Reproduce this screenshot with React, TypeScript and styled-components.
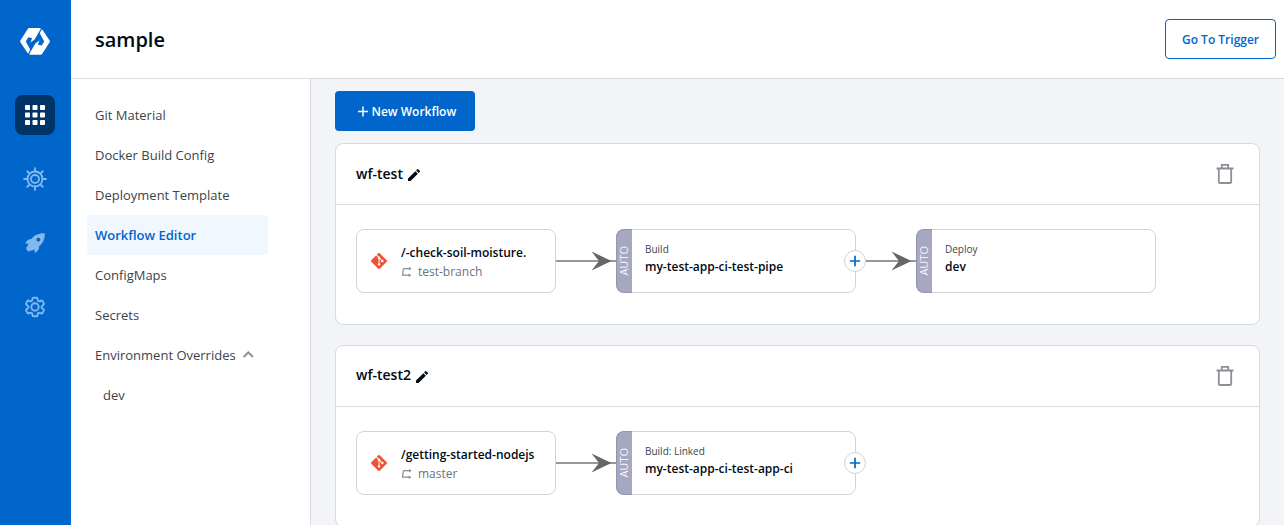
import React from "react";
import styled, { createGlobalStyle, css } from "styled-components";
import { MdEdit } from "react-icons/md";
import { SiGit } from "react-icons/si";

const GlobalStyle = createGlobalStyle`
  * { box-sizing: border-box; }
  body {
    margin: 0;
    height: 525px;
    overflow: hidden;
    font-family: "Open Sans", sans-serif;
    color: #000a14;
  }
  svg { display: block; flex: none; }
`;

const Shell = styled.div`
  display: grid;
  grid-template-columns: 71px 1fr;
  height: 525px;
  overflow: hidden;
`;

const Rail = styled.aside`
  background: #0066cc;
  display: flex;
  flex-direction: column;
  align-items: center;
  padding: 21px 1px 0 0;
  gap: 24px;
`;

const Logo = styled.div`
  height: 50px;
  padding-top: 6px;
`;

const RailButton = styled.a<{ $active?: boolean }>`
  width: 40px;
  height: 40px;
  border-radius: 8px;
  display: flex;
  align-items: center;
  justify-content: center;
  color: #80b8f0;
  ${(p) => p.$active && css`background: #003366; color: #fff;`}
`;

const Page = styled.div`
  display: flex;
  flex-direction: column;
  min-width: 0;
`;

const Header = styled.header`
  height: 79px;
  flex: none;
  display: flex;
  align-items: center;
  justify-content: space-between;
  padding: 0 8px 0 24px;
  border-bottom: 1px solid #d6dbdf;
  background: #fff;
`;

const Title = styled.h1`
  margin: 0;
  padding-top: 2px;
  font-size: 20px;
  font-weight: 600;
  line-height: 28px;
`;

const TriggerButton = styled.button`
  width: 111px;
  height: 40px;
  padding: 2px 0 0;
  border: 1px solid #0066cc;
  border-radius: 4px;
  background: #fff;
  color: #0066cc;
  font: 600 12px/20px "Open Sans", sans-serif;
`;

const Body = styled.div`
  display: grid;
  grid-template-columns: 240px 1fr;
  flex: 1;
  min-height: 0;
`;

const Nav = styled.nav`
  padding: 16px 42px 0 16px;
  border-right: 1px solid #d6dbdf;
  background: #fff;
`;

const NavItem = styled.a<{ $active?: boolean; $nested?: boolean }>`
  display: flex;
  align-items: center;
  gap: 7px;
  height: 40px;
  padding-left: ${(p) => (p.$nested ? 16 : 8)}px;
  border-radius: 4px;
  font-size: 13px;
  white-space: nowrap;
  color: #3b444c;
  ${(p) => p.$active && css`background: #f0f7ff; color: #0066cc; font-weight: 600;`}
`;

const Main = styled.main`
  background: #f2f4f7;
  padding: 12px 24px 0;
  overflow: hidden;
`;

const NewButton = styled.button`
  display: flex;
  align-items: center;
  gap: 1.500px;
  width: 140px;
  height: 40px;
  padding: 2px 0 0 22px;
  margin-bottom: 12px;
  border: 0;
  border-radius: 4px;
  background: #0066cc;
  color: #fff;
  font: 600 12px/20px "Open Sans", sans-serif;
`;

const Card = styled.section`
  height: 182px;
  margin-bottom: 20px;
  border: 1px solid #d6dbdf;
  border-radius: 8px;
  background: #fff;
`;

const CardHeader = styled.div`
  height: 61px;
  display: flex;
  align-items: center;
  padding: 0 25px 0 20px;
  border-bottom: 1px solid #d6dbdf;
`;

const CardName = styled.span<{ $lift: number }>`
  font-size: 14px;
  font-weight: 600;
  line-height: 20px;
  margin-right: 3px;
  padding-bottom: ${(p) => p.$lift}px;
`;

const EditMark = styled.span`
  padding-top: 2px;
`;

const Trash = styled.span`
  margin-left: auto;
`;

const Flow = styled.div`
  display: flex;
  align-items: center;
  padding: 24px 20px 0;
`;

const Node = styled.div<{ $width: number }>`
  position: relative;
  display: flex;
  align-items: center;
  width: ${(p) => p.$width}px;
  height: 64px;
  flex: none;
  border: 1px solid #d0d4d9;
  border-radius: 8px;
`;

const GitMark = styled.span`
  color: #f05133;
  margin: 0 14px;
`;

const NodeText = styled.div<{ $padTop?: number; $padBottom?: number }>`
  display: flex;
  flex-direction: column;
  padding-top: ${(p) => p.$padTop ?? 0}px;
  padding-bottom: ${(p) => p.$padBottom ?? 0}px;
  white-space: nowrap;
`;

const NodeName = styled.span`
  font-size: 12px;
  font-weight: 600;
  line-height: 18px;
`;

const Branch = styled.span`
  display: flex;
  align-items: center;
  gap: 5px;
  font-size: 12px;
  line-height: 20px;
  color: #6b737a;
`;

const Kind = styled.span`
  font-size: 10px;
  line-height: 17px;
  color: #3b444c;
`;

const AutoTab = styled.div`
  width: 16px;
  height: 64px;
  margin: -1px 13px -1px -1px;
  padding-right: 2px;
  flex: none;
  display: flex;
  align-items: center;
  justify-content: center;
  border: 1px solid #9495b3;
  border-right: 0;
  border-radius: 8px 0 0 8px;
  background: #a6a7c0;
  color: #f4f4f8;
`;

const AutoText = styled.span`
  writing-mode: vertical-rl;
  transform: rotate(180deg);
  font-size: 11px;
  line-height: 14px;
`;

const AddBadge = styled.span`
  position: absolute;
  right: -11px;
  top: 20px;
  width: 22px;
  height: 22px;
  border: 1px solid #d0d4d9;
  border-radius: 50%;
  background: #fff;
  z-index: 1;
`;

const BadgePlus = () => (
  <svg width="20" height="20" viewBox="0 0 20 20">
    <path d="M10 4.800v10.400M4.800 10h10.400" stroke="#0066cc" strokeWidth="1.700" />
  </svg>
);

const ButtonPlus = () => (
  <svg width="13" height="12" viewBox="0 0 13 12">
    <path d="M6 0.500v10M1 5.500h10" stroke="#fff" strokeWidth="1.500" />
  </svg>
);

const Arrow = () => (
  <svg width="60" height="20" viewBox="0 0 60 20">
    <path d="M0 10h60" stroke="#767676" strokeWidth="1.700" />
    <path d="M35.500 0.500 55.500 10 35.500 19.500 43 10z" fill="#666" />
  </svg>
);

const BranchIcon = () => (
  <svg width="12" height="12" viewBox="0 0 12 12" fill="none" stroke="#858c93" strokeWidth="1.200">
    <path d="M9 2.600H3.200Q2.400 2.600 2.200 3.600L1.600 9.200H8.500" />
    <path d="M8 1 10.600 2.600 8 4.400zM7.800 7.400 10.400 9.200 7.800 10.900z" fill="#858c93" stroke="none" />
  </svg>
);

const TrashIcon = () => (
  <svg width="18" height="22" viewBox="0 0 18 22" fill="none" stroke="#8a9096" strokeWidth="1.800">
    <path d="M0.500 5.500h17M5.800 5.500V1.900h6.400v3.600M2.800 5.500v12.900q0 1.600 1.600 1.600h9.200q1.600 0 1.600-1.600V5.500" />
  </svg>
);

const GridIcon = () => (
  <svg width="20" height="20" viewBox="0 0 20 20" fill="currentColor">
    {[0, 7.5, 15].map((y) =>
      [0, 7.5, 15].map((x) => <rect key={`${x}-${y}`} x={x} y={y} width="5" height="5" rx="0.8" />)
    )}
  </svg>
);

const HelmIcon = () => (
  <svg width="24" height="24" viewBox="0 0 24 24" fill="none" stroke="currentColor" strokeWidth="1.900" strokeLinecap="round">
    <circle cx="12" cy="12" r="7.500" />
    <circle cx="12" cy="12" r="4" />
    {[0, 45, 90, 135, 180, 225, 270, 315].map((a) => (
      <path key={a} d="M12 4.500V1.100" transform={`rotate(${a} 12 12)`} />
    ))}
  </svg>
);

const RocketIcon = () => (
  <svg width="24" height="24" viewBox="0 0 24 24" fill="currentColor">
    <path d="M21.800 2.300C15.600 2.100 11 4.300 8.400 8.100 5.600 7.900 3.600 9.600 2.200 12.600L5.400 12.700C5 13.600 4.700 14.300 4.600 15L3.200 16.600Q2.700 17.600 3.700 18.200Q3.600 19.700 5 19.700Q6.200 21 7.500 19.800L9.200 19.200C9.900 19.100 10.600 18.900 11.400 18.500L12 21.900C15 20.200 16.300 18.200 16 15.500 19.700 12.500 22 8.300 21.800 2.300z" />
    <circle cx="15.400" cy="8.700" r="1.900" fill="#1b5da8" />
  </svg>
);

const GearIcon = () => (
  <svg width="24" height="24" viewBox="0 0 24 24" fill="none" stroke="currentColor" strokeWidth="1.900" strokeLinejoin="round">
    <circle cx="12" cy="12" r="3.700" />
    <path d="M10.400 2.700h3.200q.8 0 .9.800l.2 1.500q.2 1 1.200 1.200.6.100 1.200-.1l1-.5q.9-.4 1.400.4l1.300 2.400q.4.800-.3 1.300l-1.300 1q-.7.500-.7 1.300t.7 1.300l1.300 1q.7.500.3 1.300l-1.300 2.400q-.5.800-1.400.4l-1-.5q-.6-.2-1.200-.1-1 .2-1.200 1.200l-.2 1.500q-.1.800-.9.800h-3.200q-.8 0-.9-.8l-.2-1.500q-.2-1-1.200-1.200-.6-.1-1.200.1l-1 .5q-.9.400-1.400-.4l-1.300-2.400q-.4-.8.300-1.300l1.300-1q.7-.5.700-1.300t-.7-1.300l-1.300-1q-.7-.5-.3-1.300l1.300-2.400q.5-.8 1.400-.4l1 .5q.6.200 1.200.1 1-.2 1.200-1.200l.2-1.500q.1-.8.9-.8z" />
  </svg>
);

const LOGO_HALF =
  "M10.200 1H20.800Q22.200 1 21.500 2.200L15.600 12.400 11.400 15.600Q12.600 13.600 13 11L9.300 10.200 6.800 14.400 11.200 22.500 9.400 26.200Q8.700 26.400 8.200 25.600L1.400 15.200Q0.900 14.400 1.400 13.600L8.900 1.700Q9.400 1 10.200 1z";

const LogoIcon = () => (
  <svg width="32" height="29" viewBox="0 0 32 29" fill="#fff">
    <path d={LOGO_HALF} />
    <path d={LOGO_HALF} transform="rotate(180 16 14.400)" />
  </svg>
);

const NAV = ["Git Material", "Docker Build Config", "Deployment Template", "Workflow Editor", "ConfigMaps", "Secrets"];

interface Step {
  kind: string;
  name: string;
  addable?: boolean;
}

interface Workflow {
  name: string;
  lift: number;
  repo: string;
  branch: string;
  steps: Step[];
}

const WORKFLOWS: Workflow[] = [
  {
    name: "wf-test",
    lift: 0,
    repo: "/-check-soil-moisture.",
    branch: "test-branch",
    steps: [
      { kind: "Build", name: "my-test-app-ci-test-pipe", addable: true },
      { kind: "Deploy", name: "dev" },
    ],
  },
  {
    name: "wf-test2",
    lift: 2,
    repo: "/getting-started-nodejs",
    branch: "master",
    steps: [{ kind: "Build: Linked", name: "my-test-app-ci-test-app-ci", addable: true }],
  },
];

const WorkflowCard = ({ wf }: { wf: Workflow }) => (
  <Card>
    <CardHeader>
      <CardName $lift={wf.lift}>{wf.name}</CardName>
      <EditMark><MdEdit size={16} /></EditMark>
      <Trash><TrashIcon /></Trash>
    </CardHeader>
    <Flow>
      <Node $width={200}>
        <GitMark><SiGit size={16} /></GitMark>
        <NodeText $padTop={4}>
          <NodeName>{wf.repo}</NodeName>
          <Branch><BranchIcon />{wf.branch}</Branch>
        </NodeText>
      </Node>
      {wf.steps.map((s) => (
        <React.Fragment key={s.name}>
          <Arrow />
          <Node $width={240}>
            <AutoTab><AutoText>AUTO</AutoText></AutoTab>
            <NodeText $padBottom={5}>
              <Kind>{s.kind}</Kind>
              <NodeName>{s.name}</NodeName>
            </NodeText>
            {s.addable && <AddBadge><BadgePlus /></AddBadge>}
          </Node>
        </React.Fragment>
      ))}
    </Flow>
  </Card>
);

export default function App() {
  return (
    <>
      <GlobalStyle />
      <Shell>
        <Rail>
          <Logo><LogoIcon /></Logo>
          <RailButton $active><GridIcon /></RailButton>
          <RailButton><HelmIcon /></RailButton>
          <RailButton><RocketIcon /></RailButton>
          <RailButton><GearIcon /></RailButton>
        </Rail>
        <Page>
          <Header>
            <Title>sample</Title>
            <TriggerButton>Go To Trigger</TriggerButton>
          </Header>
          <Body>
            <Nav>
              {NAV.map((n) => (
                <NavItem key={n} $active={n === "Workflow Editor"}>{n}</NavItem>
              ))}
              <NavItem>
                Environment Overrides
                <svg width="11" height="8" viewBox="0 0 11 8" fill="none" stroke="#8a9096" strokeWidth="2">
                  <path d="M0.700 6 5.300 1.400 9.900 6" />
                </svg>
              </NavItem>
              <NavItem $nested>dev</NavItem>
            </Nav>
            <Main>
              <NewButton><ButtonPlus />New Workflow</NewButton>
              {WORKFLOWS.map((wf) => <WorkflowCard key={wf.name} wf={wf} />)}
            </Main>
          </Body>
        </Page>
      </Shell>
    </>
  );
}
